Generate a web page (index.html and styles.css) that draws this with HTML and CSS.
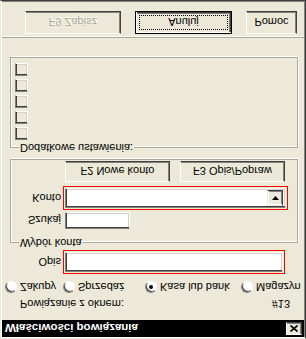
FILE: index.html
```html
<!DOCTYPE html>
<html lang="pl">
<head>
    <meta charset="UTF-8">
    <title>Właściwości powiązania</title>
    <link rel="stylesheet" href="styles.css">
</head>
<body>
    <div class="window">
        <div class="titlebar">
            <span class="title">Właściwości powiązania</span>
            <span class="close">
                <svg width="8" height="7" viewBox="0 0 8 7"><path d="M0.5 0.5 L7.5 6.5 M7.5 0.5 L0.5 6.5" stroke="#000" stroke-width="1.6"/></svg>
            </span>
        </div>

        <div class="link-row">
            <span>Powiązanie z oknem:</span>
            <span>#13</span>
        </div>

        <div class="radios">
            <span class="radio-item"><span class="radio"></span>Zakupy</span>
            <span class="radio-item"><span class="radio"></span>Sprzedaż</span>
            <span class="radio-item"><span class="radio checked"></span>Kasa lub bank</span>
            <span class="radio-item"><span class="radio"></span>Magazyn</span>
        </div>

        <div class="field opis">
            <label class="field-label">Opis</label>
            <div class="frame required opis-frame"><div class="edit"></div></div>
        </div>

        <div class="group account">
            <span class="caption">Wybór konta</span>
            <div class="field">
                <label class="field-label">Szukaj</label>
                <div class="frame"><div class="edit search"></div></div>
            </div>
            <div class="field">
                <label class="field-label">Konto</label>
                <div class="frame required konto-frame">
                    <div class="edit combo"><span class="drop"><svg width="7" height="4" viewBox="0 0 7 4"><path d="M0 0 H7 L3.5 4 Z" fill="#000"/></svg></span></div>
                </div>
            </div>
            <div class="group-buttons">
                <button class="btn wide">F2 Nowe konto</button>
                <button class="btn wide">F3 Opis/Popraw</button>
            </div>
        </div>

        <div class="group extra">
            <span class="caption">Dodatkowe ustawienia:</span>
            <span class="check"></span>
            <span class="check"></span>
            <span class="check"></span>
            <span class="check"></span>
            <span class="check"></span>
        </div>

        <div class="separator"></div>

        <div class="buttons">
            <button class="btn save" disabled>F9 Zapisz</button>
            <button class="btn default cancel"><span class="focus">Anuluj</span></button>
            <button class="btn help">Pomoc</button>
        </div>
    </div>
</body>
</html>
```

FILE: styles.css
```css
/* Page */
body {
    margin: 0;
    font-family: "Liberation Sans", Arial, sans-serif;
    font-size: 11px;
    color: #000;
}

/* Dialog window (shown flipped top to bottom) */
.window {
    width: 306px;
    height: 339px;
    box-sizing: border-box;
    background: #ece9d8;
    border: 1px solid;
    border-color: #ece9d8 #404040 #404040 #ece9d8;
    box-shadow: inset 1px 1px #fff, inset -1px -1px #808080;
    padding: 1px;
    transform: scaleY(-1);
    overflow: hidden;
}

/* Title bar */
.titlebar {
    height: 17px;
    background: #000;
    display: flex;
    align-items: center;
    justify-content: space-between;
    padding: 0 2px 0 3px;
}

.title {
    color: #fff;
    font-weight: bold;
    font-size: 11.5px;
}

.close {
    width: 16px;
    height: 13px;
    box-sizing: border-box;
    background: #ece9d8;
    border: 1px solid;
    border-color: #fff #404040 #404040 #fff;
    box-shadow: inset -1px -1px #808080;
    display: flex;
    align-items: center;
    justify-content: center;
}

/* "Powiązanie z oknem" row */
.link-row {
    display: flex;
    justify-content: space-between;
    height: 14px;
    line-height: 14px;
    margin-top: 9px;
    padding: 0 14px 0 18px;
}

/* Radio buttons */
.radios {
    display: grid;
    grid-template-columns: 58px 82px 96px auto;
    margin-top: 3px;
    padding-left: 3px;
    height: 13px;
}

.radio-item {
    display: flex;
    align-items: center;
    gap: 3px;
    white-space: nowrap;
}

.radio {
    width: 12px;
    height: 12px;
    box-sizing: border-box;
    border-radius: 50%;
    background: #fff;
    border: 1px solid;
    border-color: #808080 #fff #fff #808080;
    box-shadow: inset 1px 1px #404040;
    display: flex;
    align-items: center;
    justify-content: center;
}

.radio.checked::after {
    content: "";
    width: 4px;
    height: 4px;
    border-radius: 50%;
    background: #000;
}

/* Labelled edit fields */
.field {
    display: flex;
    align-items: center;
    gap: 2px;
}

.field-label {
    text-align: right;
}

.opis {
    margin-top: 7px;
}

.opis .field-label {
    width: 59px;
}

.account .field-label {
    width: 50px;
}

.frame {
    border: 1px solid transparent;
    padding: 1px;
}

.frame.required {
    border-color: #f00;
}

.opis-frame {
    width: 218px;
}

.konto-frame {
    width: 221px;
}

.edit {
    height: 20px;
    box-sizing: border-box;
    background: #fff;
    border: 1px solid;
    border-color: #808080 #fff #fff #808080;
    box-shadow: inset 1px 1px #404040, inset -1px -1px #d4d0c8;
}

.edit.search {
    width: 65px;
    height: 17px;
}

.combo {
    display: flex;
    justify-content: flex-end;
    align-items: center;
    padding-right: 2px;
}

.drop {
    width: 16px;
    height: 16px;
    box-sizing: border-box;
    background: #ece9d8;
    border: 1px solid;
    border-color: #ece9d8 #404040 #404040 #ece9d8;
    box-shadow: inset 1px 1px #fff, inset -1px -1px #808080;
    display: flex;
    align-items: center;
    justify-content: center;
}

/* Group boxes */
.group {
    position: relative;
    margin: 0 6px 0 8px;
    border: 1px solid #aca899;
    box-shadow: inset 1px 1px #fff, 1px 1px #fff;
}

.caption {
    position: absolute;
    top: -7px;
    left: 8px;
    padding: 0 1px;
    background: #ece9d8;
    line-height: 13px;
}

.account {
    margin-top: 7px;
    padding: 11px 0 1px 0;
}

.group-buttons {
    display: flex;
    gap: 10px;
    margin: 4px 0 0 54px;
}

.extra {
    margin-top: 11px;
    padding: 7px 0 5px 4px;
    display: flex;
    flex-direction: column;
    gap: 3px;
}

.check {
    width: 13px;
    height: 13px;
    box-sizing: border-box;
    border: 1px solid;
    border-color: #808080 #fff #fff #808080;
    box-shadow: inset 1px 1px #404040, inset -1px -1px #d4d0c8;
}

/* Bottom separator */
.separator {
    margin: 19px 0 0 0;
    height: 1px;
    background: #aca899;
    border-bottom: 1px solid #fff;
}

/* Push buttons */
.buttons {
    display: flex;
    gap: 14px;
    margin-top: 2px;
    padding-left: 23px;
}

.btn {
    height: 23px;
    box-sizing: border-box;
    padding: 0;
    background: #ece9d8;
    font-family: "Liberation Sans", Arial, sans-serif;
    font-size: 11px;
    color: #000;
    border: 1px solid;
    border-color: #fff #404040 #404040 #fff;
    box-shadow: inset -1px -1px #808080;
}

.btn.wide {
    width: 105px;
    height: 21px;
}

.btn.save {
    width: 96px;
    color: #aca899;
    text-shadow: 1px 1px #fff;
}

.btn.default {
    width: 97px;
    border: 1px solid #000;
    box-shadow: inset 1px 1px #fff, inset -1px -1px #404040, inset -2px -2px #808080;
    padding: 3px;
}

.focus {
    display: flex;
    height: 100%;
    box-sizing: border-box;
    align-items: center;
    justify-content: center;
    border: 1px dotted #000;
}

.btn.help {
    width: 51px;
}
```
